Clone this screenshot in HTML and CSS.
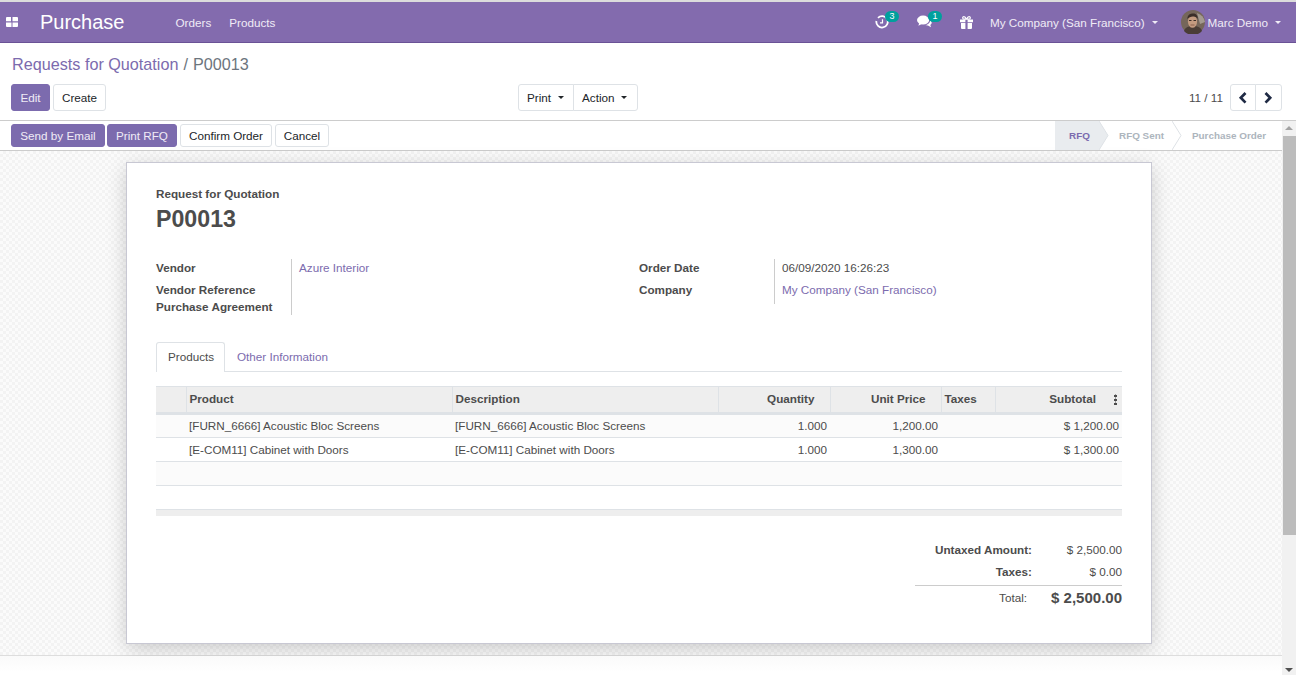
FILE: index.html
```html
<!DOCTYPE html>
<html lang="en">
<head>
    <meta charset="UTF-8">
    <title>Purchase</title>
    <link rel="stylesheet" href="styles.css">
</head>
<body>
<header class="navbar">
    <svg class="apps-icon" viewBox="0 0 12 10"><path d="M0 1a1 1 0 0 1 1-1h4v4.300H0zM6.500 0H11a1 1 0 0 1 1 1v3.300H6.500zM0 5.500h5.500V10H1a1 1 0 0 1-1-1zM6.500 5.500H12V9a1 1 0 0 1-1 1H6.500z" fill="#fff"/></svg>
    <span class="app-name">Purchase</span>
    <nav class="menu">
        <a>Orders</a>
        <a>Products</a>
    </nav>
    <div class="systray">
        <span class="tray-item tray-clock">
            <svg class="tray-icon" viewBox="0 0 14 14"><path d="M3 2.800A5.700 5.700 0 1 1 1.400 6" fill="none" stroke="#fff" stroke-width="1.800"/><path d="M7.500 4.200v3.600H5" fill="none" stroke="#fff" stroke-width="1.200"/></svg>
            <span class="badge">3</span>
        </span>
        <span class="tray-item tray-chat">
            <svg class="chat-icon" viewBox="0 0 16 13"><ellipse cx="6.500" cy="5" rx="6.500" ry="4.800" fill="#fff"/><path d="M2.500 7.500L1.500 11l4-2z" fill="#fff"/><path d="M14 5.200c1.500 1 2 2.300 1.500 3.500-.3.700-.8 1.200-1.300 1.500l.8 2.500-3.300-1.900c-1 .1-2-.1-2.800-.5 2.800-.2 5.200-2.400 5.100-5.100z" fill="#fff"/></svg>
            <span class="badge">1</span>
        </span>
        <svg class="gift-icon" viewBox="0 0 13 13"><path d="M0 3.400h5.400v2.800H0zM7.600 3.400H13v2.800H7.600zM1 7h4.400v6H2a1 1 0 0 1-1-1zM7.600 7H12v5a1 1 0 0 1-1 1H7.600z" fill="#fff"/><path d="M6.500 3.200C5.500 1.200 4.300.5 3.400.8 2.300 1.200 2.500 3 4 3.200zM6.500 3.200C7.500 1.200 8.700.5 9.600.8c1.100.4.900 2.200-.6 2.400z" fill="none" stroke="#fff" stroke-width="1.200"/></svg>
        <span class="tray-company">My Company (San Francisco)<i class="caret"></i></span>
        <svg class="avatar" viewBox="0 0 24 24">
            <circle cx="12" cy="12" r="12" fill="#75665a"/>
            <path d="M3 21c1-3.500 4-5 9-5s8 1.500 9 5a12 12 0 0 1-18 0z" fill="#4a3d36"/>
            <path d="M16 3a12 12 0 0 1 8 9l-5 2z" fill="#a49a90"/>
            <ellipse cx="11.500" cy="11.500" rx="4.600" ry="6.300" fill="#c49b80"/>
            <path d="M6.300 9C6.500 4.500 9.500 3.500 12 3.500c3 0 5 2 4.800 5.500-1-2-3-2.800-5-2.500-2 .3-4 .8-5.500 2.500z" fill="#3b2e28"/>
            <path d="M8 10.500h2.500M12.500 10.500h2.500" stroke="#3b2e28" stroke-width="1"/>
            <path d="M9.500 15h4" stroke="#8a5f4c" stroke-width="1"/>
        </svg>
        <span class="tray-user">Marc Demo<i class="caret"></i></span>
    </div>
</header>

<section class="control-panel">
    <div class="breadcrumb"><a>Requests for Quotation</a><span class="crumb-sep">/</span><span>P00013</span></div>
    <div class="cp-row">
        <div class="cp-left">
            <button class="btn btn-primary btn-edit">Edit</button>
            <button class="btn btn-create">Create</button>
        </div>
        <div class="cp-group">
            <button class="btn btn-print">Print<i class="caret"></i></button>
            <button class="btn btn-action">Action<i class="caret"></i></button>
        </div>
        <div class="pager">
            <span class="pager-value">11 / 11</span>
            <div class="pager-btns">
                <button class="btn btn-pager"><svg viewBox="0 0 10 12"><path d="M7.500 1L2.800 5.800l4.700 4.800" fill="none" stroke="#1f2a44" stroke-width="2.700"/></svg></button>
                <button class="btn btn-pager btn-pager-next"><svg viewBox="0 0 10 12"><path d="M2.500 1L7.200 5.800l-4.700 4.800" fill="none" stroke="#1f2a44" stroke-width="2.700"/></svg></button>
            </div>
        </div>
    </div>
</section>

<div class="workarea">
    <div class="main">
        <div class="statusbar">
            <div class="status-actions">
                <button class="btn btn-primary btn-small">Send by Email</button>
                <button class="btn btn-primary btn-small">Print RFQ</button>
                <button class="btn btn-small btn-confirm">Confirm Order</button>
                <button class="btn btn-small btn-cancel">Cancel</button>
            </div>
            <div class="steps">
                <span class="step step-rfq">RFQ<svg class="step-tip" viewBox="0 0 10 29"><path d="M0 0L9 14.500 0 29" fill="#e9ecef" stroke="#dee2e6"/></svg></span>
                <span class="step step-sent">RFQ Sent<svg class="step-tip" viewBox="0 0 10 29"><path d="M0 0L9 14.500 0 29" fill="#fff" stroke="#dee2e6"/></svg></span>
                <span class="step step-order">Purchase Order</span>
            </div>
        </div>
        <div class="sheet-bg">
            <div class="sheet">
                <div class="doc-label">Request for Quotation</div>
                <h1 class="doc-name">P00013</h1>
                <div class="fields">
                    <div class="field-group">
                        <div class="labels">
                            <label class="first">Vendor</label>
                            <label>Vendor Reference</label>
                            <label>Purchase Agreement</label>
                        </div>
                        <div class="values"><a>Azure Interior</a></div>
                    </div>
                    <div class="field-group field-group-right">
                        <div class="labels">
                            <label class="first">Order Date</label>
                            <label>Company</label>
                        </div>
                        <div class="values">
                            <span class="first">06/09/2020 16:26:23</span>
                            <a>My Company (San Francisco)</a>
                        </div>
                    </div>
                </div>
                <div class="tabs">
                    <span class="tab tab-active">Products</span>
                    <a class="tab">Other Information</a>
                </div>
                <table class="lines">
                    <colgroup>
                        <col class="col-handle"><col class="col-product"><col class="col-desc"><col class="col-qty"><col class="col-price"><col class="col-taxes"><col class="col-sub">
                    </colgroup>
                    <thead>
                        <tr>
                            <th></th>
                            <th>Product</th>
                            <th>Description</th>
                            <th class="num">Quantity</th>
                            <th class="num">Unit Price</th>
                            <th>Taxes</th>
                            <th class="num th-sub">Subtotal<i class="kebab"></i></th>
                        </tr>
                    </thead>
                    <tbody>
                        <tr>
                            <td></td>
                            <td>[FURN_6666] Acoustic Bloc Screens</td>
                            <td>[FURN_6666] Acoustic Bloc Screens</td>
                            <td class="num">1.000</td>
                            <td class="num">1,200.00</td>
                            <td></td>
                            <td class="num">$ 1,200.00</td>
                        </tr>
                        <tr>
                            <td></td>
                            <td>[E-COM11] Cabinet with Doors</td>
                            <td>[E-COM11] Cabinet with Doors</td>
                            <td class="num">1.000</td>
                            <td class="num">1,300.00</td>
                            <td></td>
                            <td class="num">$ 1,300.00</td>
                        </tr>
                        <tr><td colspan="7"></td></tr>
                        <tr><td colspan="7"></td></tr>
                    </tbody>
                    <tfoot>
                        <tr><td colspan="7"></td></tr>
                    </tfoot>
                </table>
                <div class="summary">
                    <div class="sum-row">
                        <span class="sum-label">Untaxed Amount:</span>
                        <span class="sum-value">$ 2,500.00</span>
                    </div>
                    <div class="sum-row">
                        <span class="sum-label">Taxes:</span>
                        <span class="sum-value">$ 0.00</span>
                    </div>
                    <div class="sum-row sum-total">
                        <span class="sum-label">Total:</span>
                        <span class="sum-value">$ 2,500.00</span>
                    </div>
                </div>
            </div>
        </div>
        <div class="chatter"></div>
    </div>
    <div class="scrollbar">
        <i class="arrow-up"></i>
        <div class="thumb"></div>
        <i class="arrow-down"></i>
    </div>
</div>
</body>
</html>
```

FILE: styles.css
```css
* {
    box-sizing: border-box;
}
body {
    margin: 0;
    height: 100vh;
    overflow: hidden;
    display: flex;
    flex-direction: column;
    background: #fff;
    color: #4c4c4c;
    font-family: "Liberation Sans", Arial, sans-serif;
    font-size: 11.7px;
    line-height: 17px;
}
a {
    color: #7c6bae;
    text-decoration: none;
}
.caret {
    display: inline-block;
    margin-left: 7px;
    vertical-align: 3px;
    border-top: 3.500px solid;
    border-left: 3.500px solid transparent;
    border-right: 3.500px solid transparent;
}

/* top bar */
.navbar {
    flex: none;
    height: 43px;
    display: flex;
    align-items: center;
    padding-left: 6px;
    background: #836bae;
    border-top: 2px solid #dcdcdc;
    border-bottom: 1px solid #6a5296;
    color: #fff;
}
.apps-icon {
    width: 12px;
    height: 10px;
}
.app-name {
    margin-left: 22px;
    font-size: 20px;
    color: #fff;
}
.menu {
    display: flex;
    gap: 18px;
    margin-left: 51px;
}
.menu a {
    color: #f0ecf6;
}
.systray {
    margin-left: auto;
    display: flex;
    align-items: center;
    padding-right: 15px;
    color: #f0ecf6;
}
.tray-item {
    position: relative;
    display: block;
    height: 14px;
}
.tray-icon {
    display: block;
    width: 14px;
    height: 14px;
}
.chat-icon {
    display: block;
    width: 15px;
    height: 13px;
}
.badge {
    position: absolute;
    top: -4px;
    left: 10px;
    width: 14px;
    height: 11px;
    border-radius: 6px;
    background: #00a09d;
    color: #fff;
    font-size: 9px;
    line-height: 11px;
    text-align: center;
}
.tray-chat {
    margin-left: 28px;
}
.tray-chat .badge {
    left: 11px;
}
.gift-icon {
    width: 13px;
    height: 13px;
    margin-left: 28px;
}
.tray-company {
    margin-left: 17px;
}
.avatar {
    width: 24px;
    height: 24px;
    margin-left: 23px;
}
.tray-user {
    margin-left: 3px;
}

/* control panel */
.control-panel {
    flex: none;
    height: 78px;
    padding: 11px 14px 0 11px;
    border-bottom: 1px solid #ccc;
}
.breadcrumb {
    padding-left: 1px;
    font-size: 16.2px;
    line-height: 20px;
    color: #6c757d;
}
.crumb-sep {
    margin: 0 5px;
}
.cp-row {
    position: relative;
    display: flex;
    justify-content: space-between;
    margin-top: 10px;
}
.btn {
    height: 27px;
    padding: 0;
    border: 1px solid #dee2e6;
    border-radius: 3px;
    background: #fff;
    color: #212529;
    font: inherit;
}
.btn-primary {
    background: #7c6bae;
    border-color: #7c6bae;
    color: #f0ecf6;
}
.cp-left {
    display: flex;
    gap: 3px;
}
.btn-edit {
    width: 39px;
}
.btn-create {
    width: 53px;
}
.cp-group {
    position: absolute;
    left: 507px;
    top: 0;
    display: flex;
}
.btn-print {
    width: 56px;
    padding-left: 8px;
    text-align: left;
    border-radius: 3px 0 0 3px;
}
.btn-action {
    width: 65px;
    margin-left: -1px;
    padding-left: 8px;
    text-align: left;
    border-radius: 0 3px 3px 0;
}
.pager {
    display: flex;
    align-items: center;
    gap: 7px;
}
.pager-btns {
    display: flex;
}
.btn-pager {
    width: 26px;
    display: flex;
    align-items: center;
    justify-content: center;
    border-radius: 3px 0 0 3px;
}
.btn-pager-next {
    margin-left: -1px;
    width: 27px;
    padding-right: 1px;
    border-radius: 0 3px 3px 0;
}
.btn-pager svg {
    width: 10px;
    height: 12px;
}

/* scrollable part */
.workarea {
    flex: 1;
    min-height: 0;
    display: flex;
}
.main {
    flex: 1;
    min-width: 0;
    display: flex;
    flex-direction: column;
}
.scrollbar {
    flex: none;
    width: 14px;
    position: relative;
    background: #f1f1f1;
    padding-top: 15px;
}
.thumb {
    height: 399px;
    margin-left: 1px;
    background: #bcbcbc;
}
.arrow-up, .arrow-down {
    position: absolute;
    left: 3px;
    border-left: 4px solid transparent;
    border-right: 4px solid transparent;
}
.arrow-up {
    top: 5px;
    border-bottom: 4px solid #a3a3a3;
}
.arrow-down {
    bottom: 3px;
    border-top: 4px solid #505050;
}
.statusbar {
    flex: none;
    height: 30px;
    display: flex;
    justify-content: space-between;
    border-bottom: 1px solid #ccc;
}
.status-actions {
    display: flex;
    padding: 3px 0 0 11px;
}
.btn-small {
    height: 23px;
    margin-right: 2px;
}
.status-actions .btn-primary:nth-child(1) {
    width: 94px;
}
.status-actions .btn-primary:nth-child(2) {
    width: 70px;
    margin-right: 3px;
}
.btn-confirm {
    width: 92px;
    margin-right: 3px;
}
.btn-cancel {
    width: 54px;
}
.steps {
    display: flex;
    font-size: 9.9px;
    font-weight: 700;
    line-height: 29px;
    color: #adb5bd;
}
.step {
    position: relative;
    height: 29px;
}
.step-tip {
    position: absolute;
    top: 0;
    left: 100%;
    width: 10px;
    height: 29px;
}
.step-rfq {
    width: 44px;
    padding-left: 14px;
    background: #e9ecef;
    color: #7c6bae;
}
.step-sent {
    width: 73px;
    padding-left: 20px;
}
.step-order {
    width: 110px;
    padding-left: 20px;
}

/* form sheet */
.sheet-bg {
    flex: none;
    height: 505px;
    padding: 11px 0 0 126px;
    background-color: #f9f9f9;
    background-image: repeating-conic-gradient(#f3f3f3 0 25%, #fbfbfb 0 50%);
    background-size: 6px 6px;
    border-bottom: 1px solid #ddd;
}
.sheet {
    width: 1026px;
    height: 482px;
    padding: 22px 29px 0;
    background: #fff;
    border: 1px solid #c8c8d3;
    box-shadow: 0 5px 20px -1px rgba(0, 0, 0, .2);
}
.doc-label {
    font-weight: 700;
}
.doc-name {
    margin: 3px 0 0;
    font-size: 23.2px;
    line-height: 29px;
    font-weight: 700;
}
.fields {
    display: flex;
    margin-top: 25px;
}
.field-group {
    width: 483px;
    display: flex;
}
.labels {
    width: 135px;
    font-weight: 700;
}
.labels label, .values a, .values span {
    display: block;
}
.first {
    margin-bottom: 5px;
}
.values {
    flex: 1;
    padding-left: 7px;
    border-left: 1px solid #ccc;
}
.field-group .values {
    height: 56px;
}
.field-group-right .values {
    height: 45px;
}
.tabs {
    display: flex;
    margin-top: 27px;
    height: 30px;
    border-bottom: 1px solid #dee2e6;
}
.tab {
    height: 30px;
    padding: 6px 12px;
}
.tab-active {
    width: 69px;
    background: #fff;
    border: 1px solid #dee2e6;
    border-bottom: 0;
    border-radius: 3px 3px 0 0;
    padding: 5px 11px;
}
.lines {
    width: 966px;
    margin-top: 14px;
    table-layout: fixed;
    border-collapse: collapse;
}
.col-handle { width: 30px; }
.col-product { width: 266px; }
.col-desc { width: 266px; }
.col-qty { width: 112px; }
.col-price { width: 111px; }
.col-taxes { width: 54px; }
.col-sub { width: 127px; }
.lines th {
    height: 27px;
    padding: 0 3px 2px;
    background: #eee;
    border-top: 1px solid #dee2e6;
    border-left: 1px solid #dee2e6;
    border-bottom: 3px solid #dee2e6;
    text-align: left;
    font-weight: 700;
}
.lines th:first-child {
    border-left: 0;
}
.lines th.num {
    text-align: right;
    padding-right: 15px;
}
.lines th.th-sub {
    position: relative;
    padding-right: 26px;
}
.kebab {
    position: absolute;
    right: 5px;
    top: 7px;
    width: 3px;
    height: 11px;
    background: radial-gradient(circle, #4c4c4c 1.4px, transparent 1.6px) 0 0 / 3px 4px repeat-y;
}
.lines td {
    height: 24px;
    padding: 0 3px;
    border-bottom: 1px solid #dee2e6;
    color: #4c4c4c;
}
.lines tbody tr:first-child td {
    padding-bottom: 2px;
}
.lines tbody tr:nth-child(odd) td {
    background: #fbfbfb;
}
.lines td.num {
    text-align: right;
}
.lines tfoot td {
    height: 6px;
    padding: 0;
    background: #eee;
    border: 0;
}
.summary {
    width: 207px;
    margin: 24px 0 0 auto;
}
.sum-row {
    display: flex;
    justify-content: space-between;
    height: 22px;
    padding-top: 1px;
}
.sum-label {
    width: 117px;
    text-align: right;
    font-weight: 700;
    white-space: nowrap;
}
.sum-total {
    height: 24px;
    margin-top: 1px;
    align-items: center;
    border-top: 1px solid #ccc;
}
.sum-total .sum-label {
    width: 112px;
    font-weight: 400;
}
.sum-total .sum-value {
    font-size: 15px;
    font-weight: 700;
}
.chatter {
    flex: 1;
    background: linear-gradient(#fafafa, #fff 16px);
}
```
